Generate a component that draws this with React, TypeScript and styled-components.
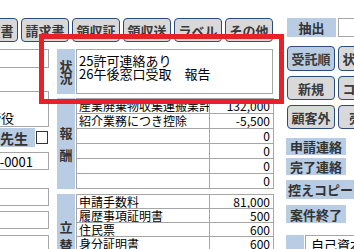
import React from "react";
import styled, { createGlobalStyle } from "styled-components";

const Global = createGlobalStyle`
  html, body { margin: 0; padding: 0; background: #fff; }
  body {
    font-family: "Noto Sans CJK JP", "Noto Sans", sans-serif;
    color: #000;
    overflow: hidden;
  }
`;

const Page = styled.div`
  position: relative;
  width: 354px;
  height: 249px;
  overflow: hidden;
  background: #fff;
`;

const Canvas = styled.div`
  display: flex;
  align-items: flex-start;
  margin-left: -26px;
  padding-top: 18px;
`;

const MainArea = styled.div`
  width: 299px;
  flex: none;
  display: flex;
  flex-direction: column;
`;

const ButtonRow = styled.div`
  display: flex;
  justify-content: flex-end;
  gap: 3px;
`;

const PillButton = styled.div<{ $tone?: "gray" | "blue"; $h?: number }>`
  width: 48px;
  height: ${(p) => p.$h ?? 24}px;
  box-sizing: border-box;
  flex: none;
  border: 1.5px solid #2b4b7c;
  border-radius: 4px;
  background: ${(p) => (p.$tone === "blue" ? "#b8cce4" : "#d9d9d9")};
  color: #3a3a3a;
  font-weight: bold;
  font-size: 13px;
  display: flex;
  align-items: center;
  justify-content: center;
  white-space: nowrap;
  overflow: hidden;
`;

const Columns = styled.div`
  display: flex;
  align-items: flex-start;
  gap: 8px;
  margin-top: 7px;
`;

const LeftCol = styled.div`
  width: 75px;
  flex: none;
  display: flex;
  flex-direction: column;
`;

const Field = styled.div<{ $h: number; $mt: number; $bottom?: boolean; $pad?: number }>`
  height: ${(p) => p.$h}px;
  margin-top: ${(p) => p.$mt}px;
  box-sizing: border-box;
  border: 1px solid #a6a6a6;
  background: #fff;
  font-size: 13px;
  line-height: 15px;
  padding: 1px ${(p) => p.$pad ?? 3}px;
  display: flex;
  align-items: ${(p) => (p.$bottom ? "flex-end" : "center")};
  white-space: nowrap;
  overflow: hidden;
`;

const CheckRow = styled.div`
  display: flex;
  align-items: center;
  gap: 1px;
  height: 19px;
  margin-top: 1px;
`;

const NameLabel = styled.div`
  width: 61px;
  height: 19px;
  background: #b8cce4;
  font-weight: bold;
  font-size: 14px;
  color: #333;
  display: flex;
  align-items: center;
  justify-content: flex-end;
  padding-right: 7px;
  box-sizing: border-box;
  white-space: nowrap;
`;

const CheckBox = styled.div`
  width: 12px;
  height: 13px;
  box-sizing: border-box;
  border: 1px solid #333;
  background: #fff;
`;

const MidCol = styled.div`
  width: 216px;
  flex: none;
  display: flex;
  flex-direction: column;
`;

const Section = styled.div<{ $mt?: number }>`
  display: flex;
  gap: 1px;
  margin-top: ${(p) => p.$mt ?? 0}px;
`;

const SideLabel = styled.div<{ $gap?: number }>`
  width: 18px;
  flex: none;
  background: #b8cce4;
  display: flex;
  flex-direction: column;
  align-items: center;
  justify-content: center;
  gap: ${(p) => p.$gap ?? 0}px;
  font-weight: bold;
  font-size: 13px;
  line-height: 12px;
  color: #333;
`;

const StatusBox = styled.div`
  flex: 1;
  height: 45px;
  box-sizing: border-box;
  border: 1px solid #a6a6a6;
  padding: 4px 2px;
  font-size: 13px;
  line-height: 13px;
  white-space: pre;
`;

const Ledger = styled.table`
  width: 197px;
  border-collapse: collapse;
  table-layout: fixed;
  font-size: 12px;
`;

const Cell = styled.td<{ $num?: boolean; $h?: number }>`
  border: 1px solid #a6a6a6;
  height: ${(p) => p.$h ?? 14}px;
  padding: 0 3px 0 2px;
  line-height: ${(p) => p.$h ?? 14}px;
  text-align: ${(p) => (p.$num ? "right" : "left")};
  white-space: nowrap;
  overflow: hidden;
  box-sizing: border-box;
`;

const RightCol = styled.div`
  width: 90px;
  flex: none;
  margin-left: 14px;
  display: flex;
  flex-direction: column;
  align-items: flex-start;
`;

const SearchRow = styled.div`
  display: flex;
  gap: 2px;
  height: 19px;
`;

const SearchLabel = styled.div`
  width: 49px;
  flex: none;
  background: #b8cce4;
  font-weight: bold;
  font-size: 13px;
  color: #333;
  display: flex;
  align-items: center;
  justify-content: center;
`;

const SearchInput = styled.div`
  width: 60px;
  flex: none;
  box-sizing: border-box;
  border: 1px solid #a6a6a6;
  background: #fff;
`;

const ButtonGrid = styled.div`
  display: grid;
  grid-template-columns: 48px 48px;
  column-gap: 3px;
  row-gap: 5px;
  margin-top: 9px;
`;

const FlatAction = styled.div<{ $mt: number; $h: number }>`
  min-width: 60px;
  box-sizing: border-box;
  padding: 0 2px;
  height: ${(p) => p.$h}px;
  margin-top: ${(p) => p.$mt}px;
  margin-left: -1px;
  background: #b8cce4;
  font-weight: bold;
  font-size: 13px;
  color: #333;
  display: flex;
  align-items: center;
  justify-content: center;
  white-space: nowrap;
`;

const BottomRow = styled.div`
  display: flex;
  gap: 1px;
  margin-top: 12px;
  margin-left: -1px;
  height: 20px;
`;

const BottomTag = styled.div`
  width: 18px;
  flex: none;
  background: #b8cce4;
`;

const BottomField = styled.div`
  width: 70px;
  flex: none;
  box-sizing: border-box;
  border: 1px solid #a6a6a6;
  font-size: 13px;
  line-height: 18px;
  padding-left: 5px;
  white-space: nowrap;
  overflow: hidden;
`;

const Highlight = styled.div`
  position: absolute;
  left: 39px;
  top: 34px;
  width: 245px;
  height: 70px;
  box-sizing: border-box;
  border: 5px solid #e8202a;
  pointer-events: none;
`;

const topButtons = ["見積書", "請求書", "領収証", "領収送", "ラベル", "その他"];

const fees: [string, string][] = [
  ["産業廃棄物収集運搬業許可", "132,000"],
  ["紹介業務につき控除", "-5,500"],
  ["", "0"],
  ["", "0"],
  ["", "0"],
  ["", "0"],
];

const advances: [string, string][] = [
  ["申請手数料", "81,000"],
  ["履歴事項証明書", "500"],
  ["住民票", "600"],
  ["身分証明書", "600"],
  ["", ""],
  ["", ""],
];

const actions: { label: string; mt: number; h: number }[] = [
  { label: "申請連絡", mt: 9, h: 17 },
  { label: "完了連絡", mt: 3, h: 17 },
  { label: "控えコピー", mt: 5, h: 19 },
  { label: "案件終了", mt: 6, h: 18 },
];

function LedgerTable({ rows, h }: { rows: [string, string][]; h: number }) {
  return (
    <Ledger>
      <colgroup>
        <col style={{ width: 133 }} />
        <col style={{ width: 64 }} />
      </colgroup>
      <tbody>
        {rows.map(([name, amount], i) => (
          <tr key={i}>
            <Cell $h={h}>{name}</Cell>
            <Cell $h={h} $num>
              {amount}
            </Cell>
          </tr>
        ))}
      </tbody>
    </Ledger>
  );
}

export default function App() {
  return (
    <Page>
      <Global />
      <Canvas>
        <MainArea>
          <ButtonRow>
            {topButtons.map((b) => (
              <PillButton key={b}>{b}</PillButton>
            ))}
          </ButtonRow>
          <Columns>
            <LeftCol>
              <Field $h={19} $mt={0} />
              <Field $h={36} $mt={23} $bottom $pad={0}>
                取締役
              </Field>
              <CheckRow>
                <NameLabel>先生</NameLabel>
                <CheckBox />
              </CheckRow>
              <Field $h={18} $mt={5}>150-0001</Field>
              <Field $h={18} $mt={18} />
              <Field $h={18} $mt={5} />
              <Field $h={18} $mt={6} />
            </LeftCol>
            <MidCol>
              <Section>
                <SideLabel>
                  <span>状</span>
                  <span>況</span>
                </SideLabel>
                <StatusBox>{"25許可連絡あり\n26午後窓口受取　報告"}</StatusBox>
              </Section>
              <Section $mt={4}>
                <SideLabel $gap={10}>
                  <span>報</span>
                  <span>酬</span>
                </SideLabel>
                <LedgerTable rows={fees} h={14} />
              </Section>
              <Section $mt={5}>
                <SideLabel $gap={6}>
                  <span>立</span>
                  <span>替</span>
                </SideLabel>
                <LedgerTable rows={advances} h={13} />
              </Section>
            </MidCol>
          </Columns>
        </MainArea>
        <RightCol>
          <SearchRow>
            <SearchLabel>抽出</SearchLabel>
            <SearchInput />
          </SearchRow>
          <ButtonGrid>
            <PillButton $tone="blue" $h={25}>受託順</PillButton>
            <PillButton $h={25}>状況順</PillButton>
            <PillButton>新規</PillButton>
            <PillButton>コピー</PillButton>
            <PillButton>顧客外</PillButton>
            <PillButton>売上</PillButton>
          </ButtonGrid>
          {actions.map((a) => (
            <FlatAction key={a.label} $mt={a.mt} $h={a.h}>
              {a.label}
            </FlatAction>
          ))}
          <BottomRow>
            <BottomTag />
            <BottomField>自己資本</BottomField>
          </BottomRow>
        </RightCol>
      </Canvas>
      <Highlight />
    </Page>
  );
}
